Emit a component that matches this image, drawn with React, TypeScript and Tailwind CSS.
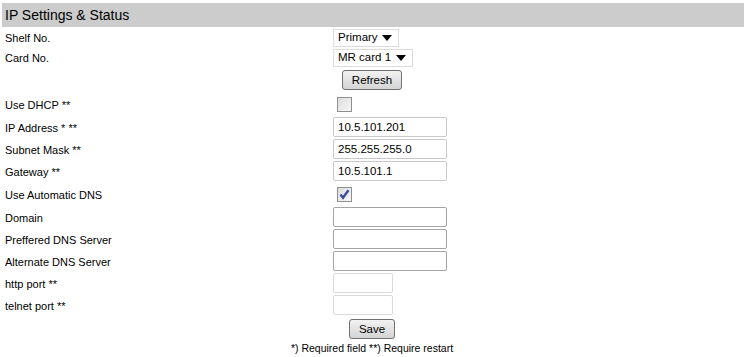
import React from 'react';

function Select({ value, width }: { value: string; width: string }) {
  return (
    <div className={`flex items-center justify-between h-[18px] border border-[#dcdcdc] bg-white pl-[4px] pr-[6px] ${width}`}>
      <span className="text-[11.5px] leading-none text-black pt-[1px]">{value}</span>
      <svg width="10" height="6" viewBox="0 0 10 6">
        <path d="M0 0 L10 0 L5 6 Z" fill="#000" />
      </svg>
    </div>
  );
}

function TextInput({ value = '', width = 'w-[114px]', border = 'border-[#c8c8c8]' }: { value?: string; width?: string; border?: string }) {
  return (
    <div className={`flex items-center h-[20px] border ${border} rounded-[2px] bg-white px-[4px] ${width}`}>
      <span className="text-[11.5px] leading-none text-black pt-[1px]">{value}</span>
    </div>
  );
}

function Checkbox({ checked = false }: { checked?: boolean }) {
  return (
    <div className="ml-[4px] w-[15px] h-[15px] border border-[#8e8f8f] bg-gradient-to-br from-[#dcdcdc] to-[#f8f8f8] flex items-center justify-center">
      {checked && (
        <svg width="11" height="11" viewBox="0 0 11 11">
          <path d="M1.5 5.5 L4 8.8 L9.5 1.2" fill="none" stroke="#3a4d98" strokeWidth="2.4" />
        </svg>
      )}
    </div>
  );
}

function Button({ label, width }: { label: string; width: string }) {
  return (
    <div className={`h-[20px] ${width} flex items-center justify-center border border-[#707070] rounded-[3px] bg-gradient-to-b from-[#f2f2f2] to-[#d4d4d4] text-[11.5px] leading-none text-black`}>
      <span className="pt-[1px]">{label}</span>
    </div>
  );
}

function Row({ label, height, children }: { label: string; height: string; children: React.ReactNode }) {
  return (
    <div className={`flex items-center ${height}`}>
      <div className="w-[331px] pl-[3px] pt-[2px] text-[11px] text-black">{label}</div>
      <div className="flex items-center">{children}</div>
    </div>
  );
}

export default function App() {
  return (
    <div className="w-[746px] h-[357px] bg-white pt-[3px] px-[2px]" style={{ fontFamily: '"Liberation Sans", Arial, sans-serif' }}>
      <div className="h-[24px] bg-[#cccccc] flex items-center pl-[3px] pt-[1px] text-[14px] text-black">IP Settings &amp; Status</div>
      <Row label="Shelf No." height="h-[21px]">
        <Select value="Primary" width="w-[66px]" />
      </Row>
      <Row label="Card No." height="h-[19px]">
        <Select value="MR card 1" width="w-[80px]" />
      </Row>
      <div className="flex justify-center h-[26px] items-center pr-[2px]">
        <Button label="Refresh" width="w-[60px]" />
      </div>
      <Row label="Use DHCP **" height="h-[23px]">
        <Checkbox />
      </Row>
      <Row label="IP Address * **" height="h-[22px]">
        <TextInput value="10.5.101.201" />
      </Row>
      <Row label="Subnet Mask **" height="h-[22px]">
        <TextInput value="255.255.255.0" />
      </Row>
      <Row label="Gateway **" height="h-[22px]">
        <TextInput value="10.5.101.1" />
      </Row>
      <Row label="Use Automatic DNS" height="h-[24px]">
        <Checkbox checked />
      </Row>
      <Row label="Domain" height="h-[22px]">
        <TextInput border="border-[#a5a5a5]" />
      </Row>
      <Row label="Preffered DNS Server" height="h-[22px]">
        <TextInput border="border-[#a5a5a5]" />
      </Row>
      <Row label="Alternate DNS Server" height="h-[22px]">
        <TextInput border="border-[#a5a5a5]" />
      </Row>
      <Row label="http port **" height="h-[22px]">
        <TextInput width="w-[60px]" border="border-[#dadada]" />
      </Row>
      <Row label="telnet port **" height="h-[22px]">
        <TextInput width="w-[60px]" border="border-[#dadada]" />
      </Row>
      <div className="flex justify-center h-[26px] items-center pr-[2px]">
        <Button label="Save" width="w-[46px]" />
      </div>
      <div className="text-center text-[10.5px] leading-[13px] text-black pr-[2px]">*) Required field **) Require restart</div>
    </div>
  );
}
